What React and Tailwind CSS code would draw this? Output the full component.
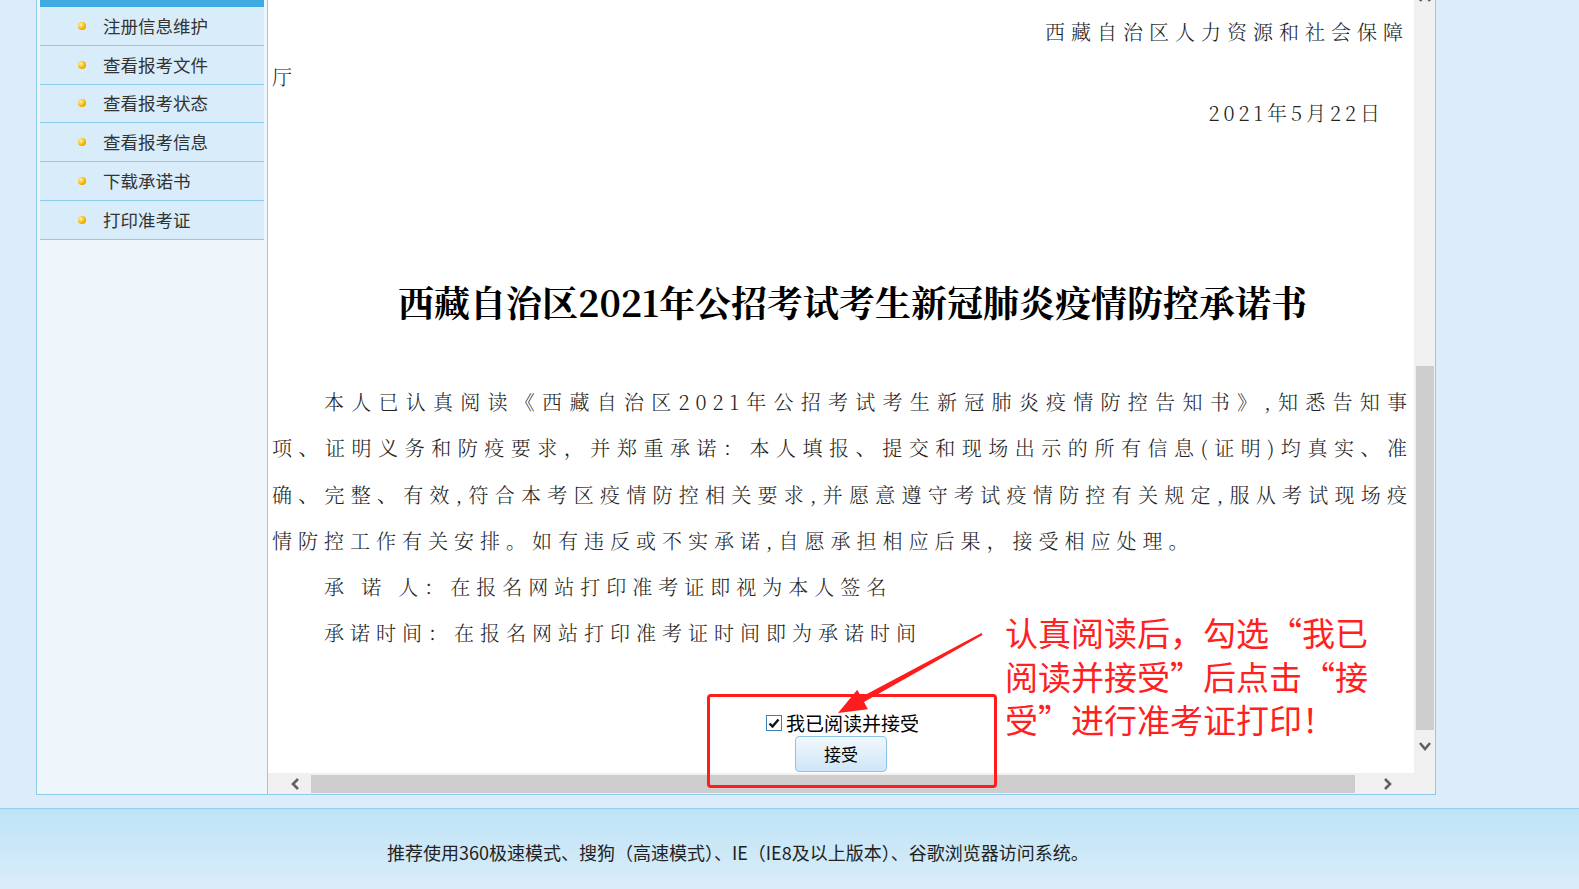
import React from 'react';

const menu = ['注册信息维护', '查看报考文件', '查看报考状态', '查看报考信息', '下载承诺书', '打印准考证'];

function Chevron({ dir }) {
    const pts = {
        up: '2,10 7,4 12,10',
        down: '2,4 7,10 12,4',
        left: '9,2 4,7 9,12',
        right: '5,2 10,7 5,12',
    }[dir];
    return (
        <svg width="14" height="14" viewBox="0 0 14 14" className="shrink-0">
            <polyline points={pts} fill="none" stroke="#606060" strokeWidth="2.6" strokeLinejoin="miter" />
        </svg>
    );
}

function Sidebar() {
    return (
        <aside className="w-[232px] h-full border-x border-b border-[#8dcbeb] bg-[#eef6fb] px-[3px]">
            <div className="h-[7px] bg-[#3eaae0]" />
            {menu.map((t) => (
                <div key={t} className="h-[38.8px] flex items-center border-b border-[#8dcbeb] bg-[#d9ecf9]">
                    <span className="ml-[38px] w-[8px] h-[8px] rounded-full bg-[radial-gradient(circle_at_35%_35%,#fff6b3,#f7b500_55%,#d58a00)]" />
                    <span className="ml-[17px] text-[17.5px] text-[#333]">{t}</span>
                </div>
            ))}
        </aside>
    );
}

function Content() {
    return (
        <div className="w-[1146px] h-full bg-white overflow-hidden pl-[4px] pr-[1px] font-['Noto_Serif_CJK_SC','Noto_Sans_CJK_SC',serif] font-light text-[20px] tracking-[6px] text-[#222]">
            {/* 落款 */}
            <div className="pt-[10px] leading-[44px] text-right pr-[4px]">西藏自治区人力资源和社会保障</div>
            <div className="leading-[46px]">厅</div>
            <div className="leading-[26px] text-right pr-[29px] tracking-[4px]">2021年5月22日</div>

            {/* 标题 */}
            <h1 className="mt-[151px] pl-[20px] leading-[50px] text-center text-[36px] font-bold tracking-normal text-black font-['Noto_Serif_CJK_SC','Liberation_Serif','Noto_Sans_CJK_SC',serif]">
                西藏自治区2021年公招考试考生新冠肺炎疫情防控承诺书
            </h1>

            {/* 正文 */}
            <div className="mt-[52px] leading-[46.3px]">
                <p className="pl-[52px] text-justify [text-align-last:justify] whitespace-nowrap">
                    本人已认真阅读《西藏自治区2021年公招考试考生新冠肺炎疫情防控告知书》,知悉告知事
                </p>
                <p className="text-justify [text-align-last:justify] whitespace-nowrap">
                    项、证明义务和防疫要求，并郑重承诺：本人填报、提交和现场出示的所有信息(证明)均真实、准
                </p>
                <p className="text-justify [text-align-last:justify] whitespace-nowrap">
                    确、完整、有效,符合本考区疫情防控相关要求,并愿意遵守考试疫情防控有关规定,服从考试现场疫
                </p>
                <p className="whitespace-nowrap">情防控工作有关安排。如有违反或不实承诺,自愿承担相应后果，接受相应处理。</p>
                <p className="pl-[52px] whitespace-nowrap">承 诺 人：在报名网站打印准考证即视为本人签名</p>
                <p className="pl-[52px] whitespace-nowrap">承诺时间：在报名网站打印准考证时间即为承诺时间</p>
            </div>

            {/* 同意 */}
            <div className="mt-[56px] h-[20px] flex items-center justify-center gap-[4px] font-['Noto_Sans_CJK_SC',sans-serif] font-normal tracking-normal text-[19px] text-black">
                <span className="w-[16px] h-[16px] border border-[#3d7fb5] bg-white flex items-center justify-center">
                    <svg width="12" height="12" viewBox="0 0 12 12">
                        <polyline points="1.5,6.5 4.5,9.5 10.5,2.5" fill="none" stroke="#111" strokeWidth="2.4" />
                    </svg>
                </span>
                <span className="leading-[20px]">我已阅读并接受</span>
            </div>
            <div className="mt-[3px] flex justify-center pr-[3px]">
                <button className="w-[92px] h-[36px] rounded-[4px] border border-[#8cc4e8] bg-linear-to-b from-[#f2f8fd] to-[#cfe5f7] text-[17px] text-black font-['Noto_Sans_CJK_SC',sans-serif] font-normal tracking-normal">
                    接受
                </button>
            </div>
        </div>
    );
}

function Frame() {
    return (
        <div className="relative w-[1168px] h-full border-r border-b border-[#8dcbeb] flex flex-col">
            <div className="flex h-[773px]">
                <Content />
                <div className="w-[21px] h-full bg-[#f0f0f0] flex flex-col items-center">
                    <div className="-mt-[9px]">
                        <Chevron dir="up" />
                    </div>
                    <div className="mt-[361px] w-[18px] h-[364px] bg-[#cdcdcd]" />
                    <div className="mt-[9px]">
                        <Chevron dir="down" />
                    </div>
                </div>
            </div>
            <div className="h-[21px] bg-[#f0f0f0] flex items-center">
                <div className="ml-[21px]">
                    <Chevron dir="left" />
                </div>
                <div className="ml-[8px] w-[1044px] h-[18px] bg-[#cdcdcd]" />
                <div className="ml-[25px]">
                    <Chevron dir="right" />
                </div>
            </div>

            {/* 标注 */}
            <div className="absolute left-[439px] top-[694px] w-[290px] h-[94px] border-[3px] border-[#ff1c1c] rounded-[4px]" />
            <svg className="absolute left-0 top-0 pointer-events-none" width="1146" height="773" viewBox="268 0 1146 773">
                <polygon
                    points="838,713 867.9,709.2 864,702.1 982.5,634.9 981.5,633.1 861.2,696.9 857.3,689.8"
                    fill="#ff1c1c"
                />
            </svg>
            <div className="absolute left-[737px] top-[611px] text-[33px] leading-[43.5px] text-[#ff2020] font-['Noto_Sans_CJK_SC',sans-serif] whitespace-nowrap">
                <div>认真阅读后，勾选“我已</div>
                <div>阅读并接受”后点击“接</div>
                <div>受”进行准考证打印！</div>
            </div>
        </div>
    );
}

export default function App() {
    return (
        <div className="w-[1579px] h-[889px] overflow-hidden bg-[#dcecfa] flex flex-col font-['Noto_Sans_CJK_SC',sans-serif]">
            <div className="flex h-[795px] pl-[36px]">
                <Sidebar />
                <Frame />
            </div>
            <div className="h-[13px]" />
            <footer className="flex-1 border-t border-[#8fd0ee] bg-linear-to-b from-[#bde4f6] to-[#dbecf9] pl-[387px] pt-[31px] text-[18px] leading-[25px] text-[#222]">
                推荐使用360极速模式、搜狗（高速模式）、IE（IE8及以上版本）、谷歌浏览器访问系统。
            </footer>
        </div>
    );
}
